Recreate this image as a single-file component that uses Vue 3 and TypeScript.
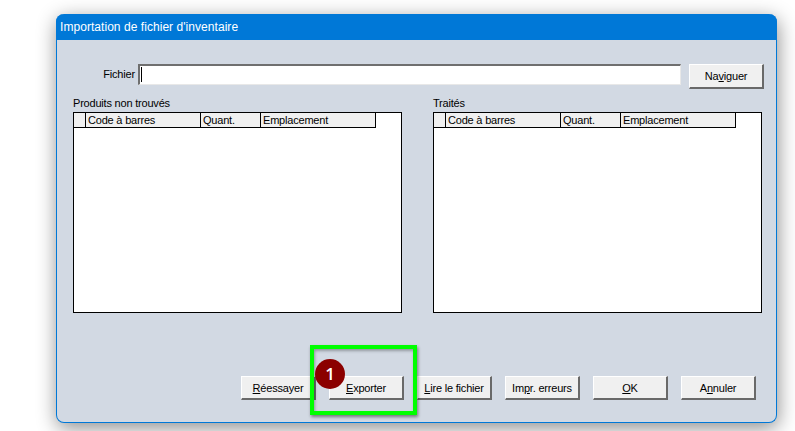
<script setup lang="ts">
interface Panel { title: string }
const panels: Panel[] = [{ title: 'Produits non trouvés' }, { title: 'Traités' }]
const columns = ['Code à barres', 'Quant.', 'Emplacement']
const actions = [
  { before: '', key: 'R', after: 'éessayer' },
  { before: '', key: 'E', after: 'xporter' },
  { before: '', key: 'L', after: 'ire le fichier' },
  { before: 'Im', key: 'p', after: 'r. erreurs' },
  { before: '', key: 'O', after: 'K' },
  { before: 'A', key: 'n', after: 'nuler' },
]
</script>

<template>
  <div class="page">
    <section class="dialog">
      <header class="titlebar">Importation de fichier d'inventaire</header>
      <div class="body">
        <div class="file-row">
          <label class="file-label">Fichier</label>
          <div class="file-input"><span class="caret"></span></div>
          <button class="btn browse">Na<u>v</u>iguer</button>
        </div>
        <div class="panels">
          <div v-for="p in panels" :key="p.title" class="panel">
            <div class="panel-title">{{ p.title }}</div>
            <div class="grid">
              <div class="grid-head">
                <div class="cell c0"></div>
                <div class="cell c1">{{ columns[0] }}</div>
                <div class="cell c2">{{ columns[1] }}</div>
                <div class="cell c3">{{ columns[2] }}</div>
              </div>
            </div>
          </div>
        </div>
        <div class="actions">
          <button v-for="a in actions" :key="a.after" class="btn">{{ a.before }}<u>{{ a.key }}</u>{{ a.after }}</button>
        </div>
      </div>
      <div class="highlight"></div>
      <div class="badge">1</div>
    </section>
  </div>
</template>

<style>
html, body { margin: 0; background: #fff; overflow: hidden; }
</style>

<style scoped>
.page {
  width: 795px;
  height: 431px;
  padding: 14px 0 0 56px;
  box-sizing: border-box;
  overflow: hidden;
  font-family: "Liberation Sans", Arial, sans-serif;
  font-size: 11px;
  letter-spacing: -0.2px;
  color: #000;
}
.dialog {
  position: relative;
  width: 721px;
  height: 409px;
  box-sizing: border-box;
  background: #d2d9e3;
  border: 1px solid #0078d7;
  border-top: 0;
  border-radius: 8px;
  box-shadow: 1px 5px 20px rgba(0, 0, 0, 0.45);
}
.titlebar {
  height: 26px;
  margin: 0 -1px;
  padding-left: 4px;
  background: #0078d7;
  border-radius: 8px 8px 0 0;
  color: #fff;
  font-size: 12px;
  letter-spacing: 0.05px;
  line-height: 27px;
}
.body { padding: 24px 12px 0 16px; }
.file-row { display: flex; align-items: flex-start; }
.file-label { width: 62px; text-align: right; line-height: 21px; }
.file-input {
  width: 544px;
  height: 21px;
  margin-left: 3px;
  box-sizing: border-box;
  background: #fff;
  border-top: 2px solid #6f6f6f;
  border-left: 2px solid #6f6f6f;
  border-right: 1px solid #e8e8e8;
  border-bottom: 1px solid #e8e8e8;
  padding: 1px 0 0 1px;
}
.caret { display: block; width: 1px; height: 15px; background: #000; }
.btn {
  width: 75px;
  height: 24px;
  box-sizing: border-box;
  padding: 0;
  background: #f0f0f0;
  border-top: 1px solid #fff;
  border-left: 1px solid #fff;
  border-right: 2px solid #696969;
  border-bottom: 2px solid #696969;
  font: inherit;
  letter-spacing: inherit;
  color: #000;
  white-space: nowrap;
}
.browse { margin-left: 8px; height: 25px; }
.panels { display: flex; gap: 31px; margin-top: 7px; }
.panel { width: 329px; }
.panel-title { height: 16px; line-height: 14px; }
.grid {
  height: 201px;
  box-sizing: border-box;
  background: #fff;
  border: 1px solid #000;
}
.grid-head {
  display: flex;
  width: 302px;
  height: 15px;
  box-sizing: border-box;
  background: #f0f0f0;
  border-bottom: 1px solid #000;
  border-right: 1px solid #000;
}
.cell {
  box-sizing: border-box;
  height: 14px;
  padding-left: 2px;
  border-right: 1px solid #000;
  line-height: 14px;
  white-space: nowrap;
}
.c0 { width: 12px; }
.c1 { width: 115px; }
.c2 { width: 60px; }
.c3 { width: 114px; border-right: 0; }
.actions {
  display: flex;
  gap: 13px;
  margin-top: 63px;
  margin-left: 168px;
}
.highlight {
  position: absolute;
  left: 253px;
  top: 331px;
  width: 107px;
  height: 70px;
  box-sizing: border-box;
  border: 4px solid #00ff00;
  box-shadow: 1px 2px 3px rgba(0, 0, 0, 0.45), inset 1px 2px 3px rgba(0, 0, 0, 0.3);
}
.badge {
  position: absolute;
  left: 258px;
  top: 345px;
  width: 30px;
  height: 30px;
  border-radius: 50%;
  background: #8b0000;
  color: #fff;
  font-family: "Open Sans", sans-serif;
  font-size: 17px;
  font-weight: 600;
  letter-spacing: 0;
  line-height: 30px;
  text-align: center;
}
</style>
